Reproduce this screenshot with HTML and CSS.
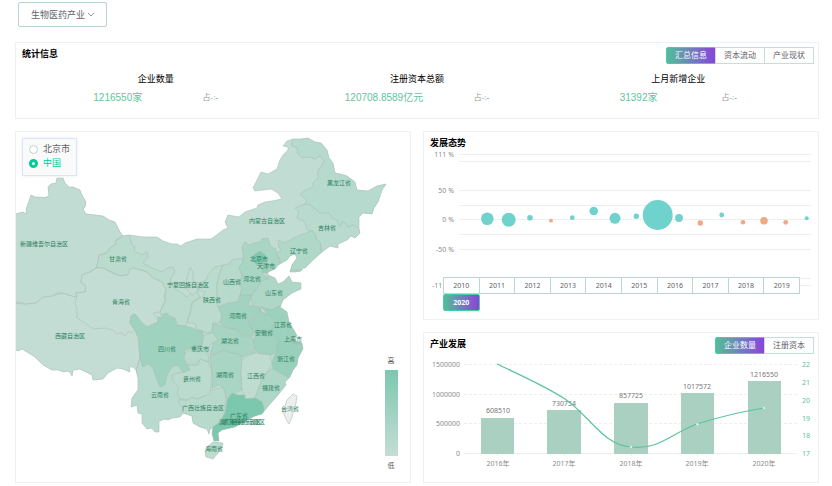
FILE: index.html
```html
<!DOCTYPE html>
<html lang="zh-CN">
<head>
    <meta charset="UTF-8">
    <meta name="viewport" content="width=device-width, initial-scale=1.0">
    <title>产业概览</title>
    <link rel="stylesheet" href="styles.css">
</head>
<body>
    <!-- Industry filter -->
    <div class="filter">
        <select class="filter-select" aria-label="产业">
            <option>生物医药产业</option>
        </select>
        <svg class="filter-arrow" viewBox="0 0 8 5"><path d="M1 1l3 3 3-3"/></svg>
    </div>

    <!-- Summary -->
    <section class="panel stats">
        <div class="panel-head">
            <h2>统计信息</h2>
            <div class="tabs">
                <button type="button" class="tab active">汇总信息</button>
                <button type="button" class="tab">资本流动</button>
                <button type="button" class="tab">产业现状</button>
            </div>
        </div>
        <div class="stats-row">
            <div class="stat">
                <h3>企业数量</h3>
                <div class="stat-values">
                    <span class="stat-number">1216550家</span>
                    <span class="stat-share">占-:<b>-</b></span>
                </div>
            </div>
            <div class="stat">
                <h3>注册资本总额</h3>
                <div class="stat-values">
                    <span class="stat-number">120708.8589亿元</span>
                    <span class="stat-share">占-:<b>-</b></span>
                </div>
            </div>
            <div class="stat">
                <h3>上月新增企业</h3>
                <div class="stat-values">
                    <span class="stat-number">31392家</span>
                    <span class="stat-share">占-:<b>-</b></span>
                </div>
            </div>
        </div>
    </section>

    <div class="columns">
        <!-- Map -->
        <section class="panel map-panel">
            <div class="region-box">
                <label><input type="radio" name="region">北京市</label>
                <label><input type="radio" name="region" checked>中国</label>
            </div>
            <svg class="map" viewBox="16 132 394 350">
                <defs>
                    <clipPath id="land">
                        <path id="outline" d="M14 214L16 214 22.7 212 27 214 26 210 28 204 31 195 35 197 45 197.5 49 196 48 187 51 184 56 183 57 178 63 178 65 183 69 187 73 187 80 190 82 195 86 202 85 207 83 209 86 214 95 215 103 216 109 220 115 222 120 232 123 236 129 235 143 237 157 237 163 241 172 244 177 244 181 246 185 243 197 239 211 239 218 234 223 230 228 228 225 222 228 215 239 217 245 212 257 208 258 205 265 202 272 201 282 199 278 193 271 189 263 190 255 191 253 188 257 180 261 172 268 174 277 169 280 160 283 155 288 150 288 147 283 146 287 141 293 139 301 139 308 138 315 142 321 143 327 150 329 158 333 163 335 173 340 174 347 176 355 182 357 190 368 191 377 186 386 184 382 190 378 202 374 208 372 214 363 213 359 217 359 229 360 233 355 238 351 236 347 240 338 244 338 248 330 246 322 252 313 260 310 263 305 268 303 268 301 271 295 272 290 272 292 265 297 258 295 254 290 256 287 260 278 265 275 269 268 272 268 275 275 278 278 284 283 282 286 279 289 276 292 282 301 283 301 289 292 293 288 296 283 300 280 307 287 312 289 322 295 332 297 336 291 340 302 343 303 349 298 358 297 365 293 370 290 377 285 382 286 385 278 395 270 404 265 410 262 414 255 416 247 420 235 427 222 430 218 433 219 441 214 441 212 433 213 428 210 429 209 434 207 429 200 427 193 423 192 416 183 413 180 417 172 418 168 420 165 419 159 421 159 432 155 432 152 428 147 429 142 423 142 414 138 413 137 405 131 407 132 398 138 390 138 378 136 370 133 367 129 367 130 372 123 369 117 368 108 373 103 379 93 380 92 375 86 372 80 369 73 370 72 376 70 372 67 371 64 372 58 370 52 370 43 365 35 357 27 352 22 349 18 351 14 349z"/>
                    </clipPath>
                    <linearGradient id="scale" x1="0" y1="0" x2="0" y2="1">
                        <stop offset="0" stop-color="#7cc8ae"/>
                        <stop offset="1" stop-color="#c4ddd4"/>
                    </linearGradient>
                </defs>

                <!-- Provinces, clipped to the coast and border line -->
                <g class="provinces" clip-path="url(#land)">
                    <rect x="10" y="130" width="390" height="320" fill="#c1dcd2"/>
                    <path fill="#c4ddd4" d="M10 303L25 304 36 303 43 297 52 296 63 293 72 296 77 297 76 293 85 292 86 287 81 283 82 275 90 272 96 268 135 330 138 338 140 357 137 368 137 400 10 400z"/>
                    <path fill="#c1dcd2" d="M10 303L20 302 25 304 36 303 43 297 52 296 57 293 63 293 72 296 77 297 76 293 85 292 86 287 84 284 81 283 82 275 90 272 96 268 98 262 99 255 107 253 110 248 116 244 116 240 123 236 123 160 10 160z"/>
                    <path fill="#bbdbcf" d="M123 236L116 240 116 244 110 248 107 253 99 255 98 262 96 268 103 268 120 276 128 275 133 268 147 272 153 278 162 282 166 290 165 302 160 312 163 320 185 328 190 313 192 302 200 297 196 288 187 297 180 292 173 287 170 280 175 272 173 267 167 268 162 272 152 268 143 263 148 257 147 252 142 255 134 251 135 247 132 245 129 234z"/>
                    <path fill="#c4ddd4" d="M96 268L103 268 112 273 120 276 128 275 130 269 133 268 140 270 147 272 153 278 162 282 166 290 164 296 165 302 163 304 160 312 153 313 157 318 158 322 147 327 142 323 135 314 131 316 130 323 135 330 131 333 129 331 125 336 121 333 117 334 113 330 105 328 93 329 85 323 77 318 77 308 75 304 77 295 76 293 85 292 86 287 84 284 81 283 82 275 90 272z"/>
                    <path fill="#c1dcd2" d="M190 267L193 272 193 280 198 287 197 292 192 295 186 288 186 282 188 275z"/>
                    <path fill="#bbdbcf" d="M223 265L215 267 208 275 206 280 202 282 198 290 205 292 202 297 193 302 192 305 190 314 187 322 195 324 197 330 208 333 212 332 213 323 220 323 222 315 218 307 217 290 217 284 219 275z"/>
                    <path fill="#b7dacd" d="M242 258L232 260 229 264 223 265 219 275 217 284 217 290 218 307 228 304 237 302 240 296 242 288 240 282 242 275 239 268 243 262z"/>
                    <path fill="#b6dacd" d="M293 139L291 145 297 148 298 154 302 158 309 157 315 159 320 156 324 161 321 167 318 170 318 178 313 183 313 187 306 190 300 194 304 198 307 200 305 204 340 235 362 231 392 220 392 130 293 130z"/>
                    <path fill="#b9dbcf" d="M305 204L295 208 299 212 297 218 305 222 307 230 312 232 315 234 317 240 320 242 322 255 364 250 364 228 360 229 353 225 348 227 343 221 340 227 337 220 332 218 329 213 320 213 315 209 310 205z"/>
                    <path fill="#b0d8c9" d="M312 230L307 233 300 235 290 240 283 243 279 240 278 245 281 251 276 253 280 260 276 267 284 280 310 274 322 254 320 242 317 240 315 234z"/>
                    <path fill="#a9d5c5" d="M242 247L245 242 249 245 254 243 260 242 262 239 268 238 271 247 276 249 276 253 280 260 280 268 268 272 262 273 268 278 262 281 257 288 252 295 240 296 242 288 240 282 242 275 239 268 243 262 243 253z"/>
                    <path fill="#7fc9b0" d="M252 258L255 254 260 251 265 255 267 259 263 263 256 265z"/>
                    <path fill="#94cfb9" d="M262 263L266 263 268 270 267 273 262 272z"/>
                    <path fill="#aed7c8" d="M262 281L257 288 251 296 252 305 262 308 272 310 281 306 310 300 306 270 268 270 268 278z"/>
                    <path fill="#a2d3c1" d="M240 295L252 295 248 305 260 308 260 313 250 318 248 323 253 330 253 336 242 335 237 330 225 327 220 323 222 315 218 307 228 303 238 302z"/>
                    <path fill="#9bd1bd" d="M261 307L268 314 272 318 275 323 271 328 273 333 278 342 290 342 310 342 300 305 281 305 272 310z"/>
                    <path fill="#a0d2bf" d="M260 308L262 312 268 314 272 318 275 323 271 328 273 333 278 342 276 350 272 355 258 353 252 343 255 336 253 330 248 322 252 318 258 315z"/>
                    <path fill="#99d0bc" d="M278 342L290 342 310 340 308 365 289 380 280 373 273 370 272 362 276 350z"/>
                    <path fill="#8bccb4" d="M291 340L297 338 303 341 302 344 293 344z"/>
                    <path fill="#a8d4c4" d="M213 323L225 327 237 330 242 336 252 337 255 347 255 353 248 354 242 357 232 353 223 350 215 355 210 353 213 345 210 340 212 332z"/>
                    <path fill="#b9dbcf" d="M140 357L143 367 150 362 163 375 177 363 190 372 180 399 184 408 184 440 120 440 120 407 137 368z"/>
                    <path fill="#b8dacd" d="M225 405L226 394 223 387 212 390 204 396 197 399 192 397 187 400 179 400 179 404 183 408 183 440 213 440 213 427 220 422 225 413z"/>
                    <path fill="#b7dacd" d="M212 332L218 340 210 345 208 353 209 362 200 360 195 365 188 365 183 358 185 353 192 348 202 345 203 336z"/>
                    <path fill="#bbdbcf" d="M172 375L178 373 185 372 188 365 198 365 200 359 208 362 212 370 211 385 210 394 204 396 197 399 192 397 187 400 179 398 177 393 179 387 173 382z"/>
                    <path fill="#a9d5c5" d="M210 354L215 355 223 350 232 353 240 354 243 362 241 373 242 390 235 393 231 394 227 399 223 387 219 385 212 388 213 378 211 368z"/>
                    <path fill="#bfdcd1" d="M242 360L247 356 255 353 270 355 272 365 263 377 258 390 255 399 245 399 244 395 242 390 241 373z"/>
                    <path fill="#afd7c8" d="M272 368L263 377 258 390 255 398 262 402 264 413 300 400 289 378 280 373z"/>
                    <path fill="#7cc8ae" d="M227 400L232 393 238 395 245 395 245 399 255 398 262 402 264 408 264 425 220 450 210 445 213 427 220 422 225 413z"/>
                    <path fill="#9fd3c0" d="M135 314L142 323 147 327 158 322 158 317 162 318 163 314 167 313 169 316 175 318 177 325 185 326 192 328 197 330 203 331 203 337 202 345 192 348 185 350 184 360 190 370 183 372 177 365 172 367 167 375 165 385 160 387 157 380 153 368 147 363 143 367 140 357 139 338 135 330 130 323 131 316z"/>
                </g>
                <use href="#outline" class="border"/>
                <path class="island" fill="#bfdcd1" d="M205 452L207 447 213 442 223 443 222 448 218 453 213 459 206 457z"/>
                <path class="island" fill="#eee" d="M293 394L297 396 296 403 292 417 289 424 287 421 283 412 287 400z"/>

                <g class="map-labels">
                    <text x="44" y="244">新疆维吾尔自治区</text>
                    <text x="118" y="259">甘肃省</text>
                    <text x="121" y="302">青海省</text>
                    <text x="188" y="285">宁夏回族自治区</text>
                    <text x="70" y="336">西藏自治区</text>
                    <text x="212" y="300">陕西省</text>
                    <text x="167" y="349">四川省</text>
                    <text x="200" y="349">重庆市</text>
                    <text x="192" y="379">贵州省</text>
                    <text x="160" y="395">云南省</text>
                    <text x="203" y="408">广西壮族自治区</text>
                    <text x="339" y="183">黑龙江省</text>
                    <text x="267" y="221">内蒙古自治区</text>
                    <text x="327" y="228">吉林省</text>
                    <text x="299" y="251">辽宁省</text>
                    <text x="259" y="259">北京市</text>
                    <text x="266" y="266">天津市</text>
                    <text x="232" y="282">山西省</text>
                    <text x="252" y="279">河北省</text>
                    <text x="274" y="293">山东省</text>
                    <text x="238" y="316">河南省</text>
                    <text x="283" y="325">江苏省</text>
                    <text x="264" y="333">安徽省</text>
                    <text x="230" y="341">湖北省</text>
                    <text x="293" y="339">上海市</text>
                    <text x="286" y="359">浙江省</text>
                    <text x="225" y="375">湖南省</text>
                    <text x="256" y="376">江西省</text>
                    <text x="271" y="388">福建省</text>
                    <text x="290" y="409">台湾省</text>
                    <text x="239" y="416">广东省</text>
                    <text x="240" y="422">澳门特别行政区</text>
                    <text x="244" y="422">香港特别行政区</text>
                    <text x="214" y="449">海南省</text>
                </g>

                <!-- Colour scale -->
                <rect x="385" y="370" width="13" height="86" fill="url(#scale)"/>
                <g class="scale-labels">
                    <text x="391" y="360">高</text>
                    <text x="391" y="465">低</text>
                </g>
            </svg>
        </section>

        <div class="side">
            <!-- Trend bubbles -->
            <section class="panel trend">
                <div class="panel-head">
                    <h2>发展态势</h2>
                </div>
                <svg class="chart" viewBox="424 151 394 168">
                    <path class="grid" d="M459 154.5H811M459 161.5H811M459 190.5H811M459 205.5H811M459 219.5H811M459 234.5H811M459 249.5H811M459 278.5H811M459 285.5H811"/>
                    <g class="axis-left">
                        <text x="454" y="154">111 %</text>
                        <text x="454" y="190">50 %</text>
                        <text x="454" y="219">0 %</text>
                        <text x="454" y="249">-50 %</text>
                        <text x="454" y="285">-111 %</text>
                    </g>
                    <g class="bubble-up">
                        <circle cx="487.3" cy="218.7" r="6.3"/>
                        <circle cx="508.7" cy="219.7" r="7"/>
                        <circle cx="530" cy="217.7" r="2.8"/>
                        <circle cx="572.3" cy="217.7" r="2.4"/>
                        <circle cx="593.7" cy="211" r="4.3"/>
                        <circle cx="615" cy="218.3" r="5.5"/>
                        <circle cx="636.3" cy="216.3" r="2.7"/>
                        <circle cx="657.7" cy="215" r="15"/>
                        <circle cx="679" cy="218" r="3.9"/>
                        <circle cx="721.7" cy="215" r="2.4"/>
                        <circle cx="806.7" cy="218.3" r="2"/>
                    </g>
                    <g class="bubble-down">
                        <circle cx="551" cy="220.7" r="1.9"/>
                        <circle cx="700.3" cy="223" r="2.8"/>
                        <circle cx="743" cy="222.3" r="2.3"/>
                        <circle cx="764" cy="220.7" r="3.8"/>
                        <circle cx="785.7" cy="222.3" r="2.4"/>
                    </g>
                </svg>
                <div class="years">
                    <button type="button" class="year">2010</button>
                    <button type="button" class="year">2011</button>
                    <button type="button" class="year">2012</button>
                    <button type="button" class="year">2013</button>
                    <button type="button" class="year">2014</button>
                    <button type="button" class="year">2015</button>
                    <button type="button" class="year">2016</button>
                    <button type="button" class="year">2017</button>
                    <button type="button" class="year">2018</button>
                    <button type="button" class="year">2019</button>
                    <button type="button" class="year active">2020</button>
                </div>
            </section>

            <!-- Yearly growth -->
            <section class="panel growth">
                <div class="panel-head">
                    <h2>产业发展</h2>
                    <div class="tabs">
                        <button type="button" class="tab active">企业数量</button>
                        <button type="button" class="tab">注册资本</button>
                    </div>
                </div>
                <svg class="chart" viewBox="424 354 394 128">
                    <path class="grid dashed" d="M464 364.5H797M464 394.5H797M464 423.5H797"/>
                    <path class="grid" d="M464 453.5H797M497.5 454v2M564.5 454v2M631.5 454v2M697.5 454v2M764.5 454v2"/>
                    <g class="bars">
                        <rect x="481" y="418" width="33" height="36"/>
                        <rect x="547" y="410" width="34" height="44"/>
                        <rect x="614" y="403" width="34" height="51"/>
                        <rect x="681" y="393" width="33" height="61"/>
                        <rect x="748" y="381" width="33" height="73"/>
                    </g>
                    <g class="values">
                        <text x="498" y="410">608510</text>
                        <text x="564" y="403">730754</text>
                        <text x="631" y="395">857725</text>
                        <text x="697" y="386">1017572</text>
                        <text x="764" y="374">1216550</text>
                    </g>
                    <path class="line" d="M497 364C520 375 545 386 565 399C590 416 603 445 631 447C659 450 670 434 697 424C722 416 740 412 764 408"/>
                    <g class="points">
                        <circle cx="631" cy="447" r="1.2"/>
                        <circle cx="697.5" cy="424.3" r="1.2"/>
                        <circle cx="764" cy="408" r="1.2"/>
                    </g>
                    <g class="axis-left">
                        <text x="460" y="364">1500000</text>
                        <text x="460" y="394">1000000</text>
                        <text x="460" y="423">500000</text>
                        <text x="460" y="453">0</text>
                    </g>
                    <g class="axis-right">
                        <text x="802" y="364">22</text>
                        <text x="802" y="382">21</text>
                        <text x="802" y="400">20</text>
                        <text x="802" y="418">19</text>
                        <text x="802" y="435">18</text>
                        <text x="802" y="453">17</text>
                    </g>
                    <g class="axis-bottom">
                        <text x="498" y="463">2016年</text>
                        <text x="564" y="463">2017年</text>
                        <text x="631" y="463">2018年</text>
                        <text x="697" y="463">2019年</text>
                        <text x="764" y="463">2020年</text>
                    </g>
                </svg>
            </section>
        </div>
    </div>
</body>
</html>
```

FILE: styles.css
```css
* {
    box-sizing: border-box;
}

body {
    margin: 0;
    padding: 2px 13px 0 15px;
    background-color: #fff;
    color: #303133;
    font-family: "Liberation Sans", "Noto Sans CJK SC", sans-serif;
    font-size: 9px;
}

h2, h3 {
    margin: 0;
    font-size: 9px;
    line-height: 15px;
    color: #000;
}

h3 {
    font-weight: normal;
}

button, select {
    font-family: inherit;
    cursor: pointer;
}

svg text {
    font-family: "Noto Sans", "Noto Sans CJK SC", sans-serif;
    dominant-baseline: central;
}

/* Filter */
.filter {
    position: relative;
    width: 89px;
    margin: 0 0 15px 3px;
}

.filter-select {
    display: block;
    width: 100%;
    height: 25px;
    padding: 0 12px;
    border: 1px solid #b5d8cc;
    border-radius: 2px;
    background-color: #fff;
    color: #606266;
    font-size: 9px;
    appearance: none;
}

.filter-arrow {
    position: absolute;
    top: 10px;
    right: 12px;
    width: 8px;
    height: 5px;
    fill: none;
    stroke: #909399;
    stroke-width: 1;
    pointer-events: none;
}

/* Panels */
.panel {
    position: relative;
    border: 1px solid #ecf1f8;
    background-color: #fff;
}

.panel-head {
    display: flex;
    justify-content: space-between;
    padding: 4px 4px 0 6px;
}

.tabs {
    display: flex;
}

.tab {
    width: 50px;
    height: 17px;
    padding: 0;
    border: 1px solid #c5dfd6;
    background-color: #fff;
    color: #606266;
    font-size: 8px;
    line-height: 15px;
}

.tab + .tab {
    margin-left: -1px;
}

.tab:first-child {
    border-radius: 2px 0 0 2px;
}

.tab.active, .year.active {
    border-color: #41cfa5;
    background: linear-gradient(to right, #54bd9a, #8a43da);
    color: #fff;
}

/* Summary */
.stats {
    margin-bottom: 12px;
}

.stats-row {
    display: flex;
    padding: 8px 9px 13px;
}

.stat {
    flex: 1;
    text-align: center;
}

.stat-values {
    display: flex;
    justify-content: space-evenly;
    margin-top: 3px;
    padding: 0 8px;
    line-height: 15px;
}

.stat-number {
    color: #63c3a0;
    font-size: 10px;
}

.stat-share {
    color: #999;
    font-size: 8px;
}

.stat-share b {
    color: #63c3a0;
}

.columns {
    display: grid;
    grid-template-columns: 1fr 1fr;
    gap: 12px;
}

.side {
    display: flex;
    flex-direction: column;
    gap: 12px;
}

/* Map */
.region-box {
    position: absolute;
    top: 6px;
    left: 6px;
    padding: 3px 6px 5px;
    border: 1px solid #dae6f7;
    background-color: #fafafa;
    box-shadow: 0 0 3px #e3ecf9;
}

.region-box label {
    display: flex;
    align-items: center;
    gap: 5px;
    line-height: 14px;
    color: #606266;
}

.region-box label:has(input:checked) {
    color: #0c9;
}

.region-box input {
    width: 9px;
    height: 9px;
    margin: 0;
    border: 1px solid #b5d8cc;
    border-radius: 50%;
    background-color: #fff;
    appearance: none;
}

.region-box input:checked {
    border: 3px solid #0c9;
}

.map, .chart {
    display: block;
    width: 100%;
    height: auto;
}

.provinces path, .island {
    stroke: #a9bfb6;
    stroke-width: 0.6;
}

.border {
    fill: none;
    stroke: #a9bfb6;
    stroke-width: 0.6;
}

.map-labels {
    fill: #2a8061;
    font-size: 6px;
    text-anchor: middle;
}

.scale-labels {
    fill: #555;
    font-size: 7px;
    text-anchor: middle;
}

/* Charts */
.grid {
    fill: none;
    stroke: #eee;
}

.grid.dashed {
    stroke-dasharray: 3 2;
}

.axis-left, .axis-right, .axis-bottom, .values {
    fill: #8c8c8c;
    font-size: 7px;
}

.axis-left {
    text-anchor: end;
}

.axis-right {
    fill: #5cc3a0;
}

.axis-bottom, .values {
    text-anchor: middle;
}

.values {
    fill: #777;
}

.bubble-up {
    fill: #6fd2cd;
}

.bubble-down {
    fill: #efa985;
}

.bars {
    fill: #a9d0c1;
}

.line {
    fill: none;
    stroke: #5cc3a0;
    stroke-width: 1.2;
}

.points {
    fill: #fff;
    stroke: #8fd3bb;
    stroke-width: 0.5;
}

.years {
    position: absolute;
    right: 19px;
    bottom: 8px;
    left: 19px;
    display: grid;
    grid-template-columns: repeat(10, 1fr);
}

.year {
    height: 17px;
    margin-right: -1px;
    padding: 0;
    border: 1px solid #b9d9ce;
    background-color: #fff;
    color: #606266;
    font-family: "Noto Sans", sans-serif;
    font-size: 7px;
    line-height: 15px;
}

.year.active {
    border-radius: 2px;
    font-weight: bold;
}
```
